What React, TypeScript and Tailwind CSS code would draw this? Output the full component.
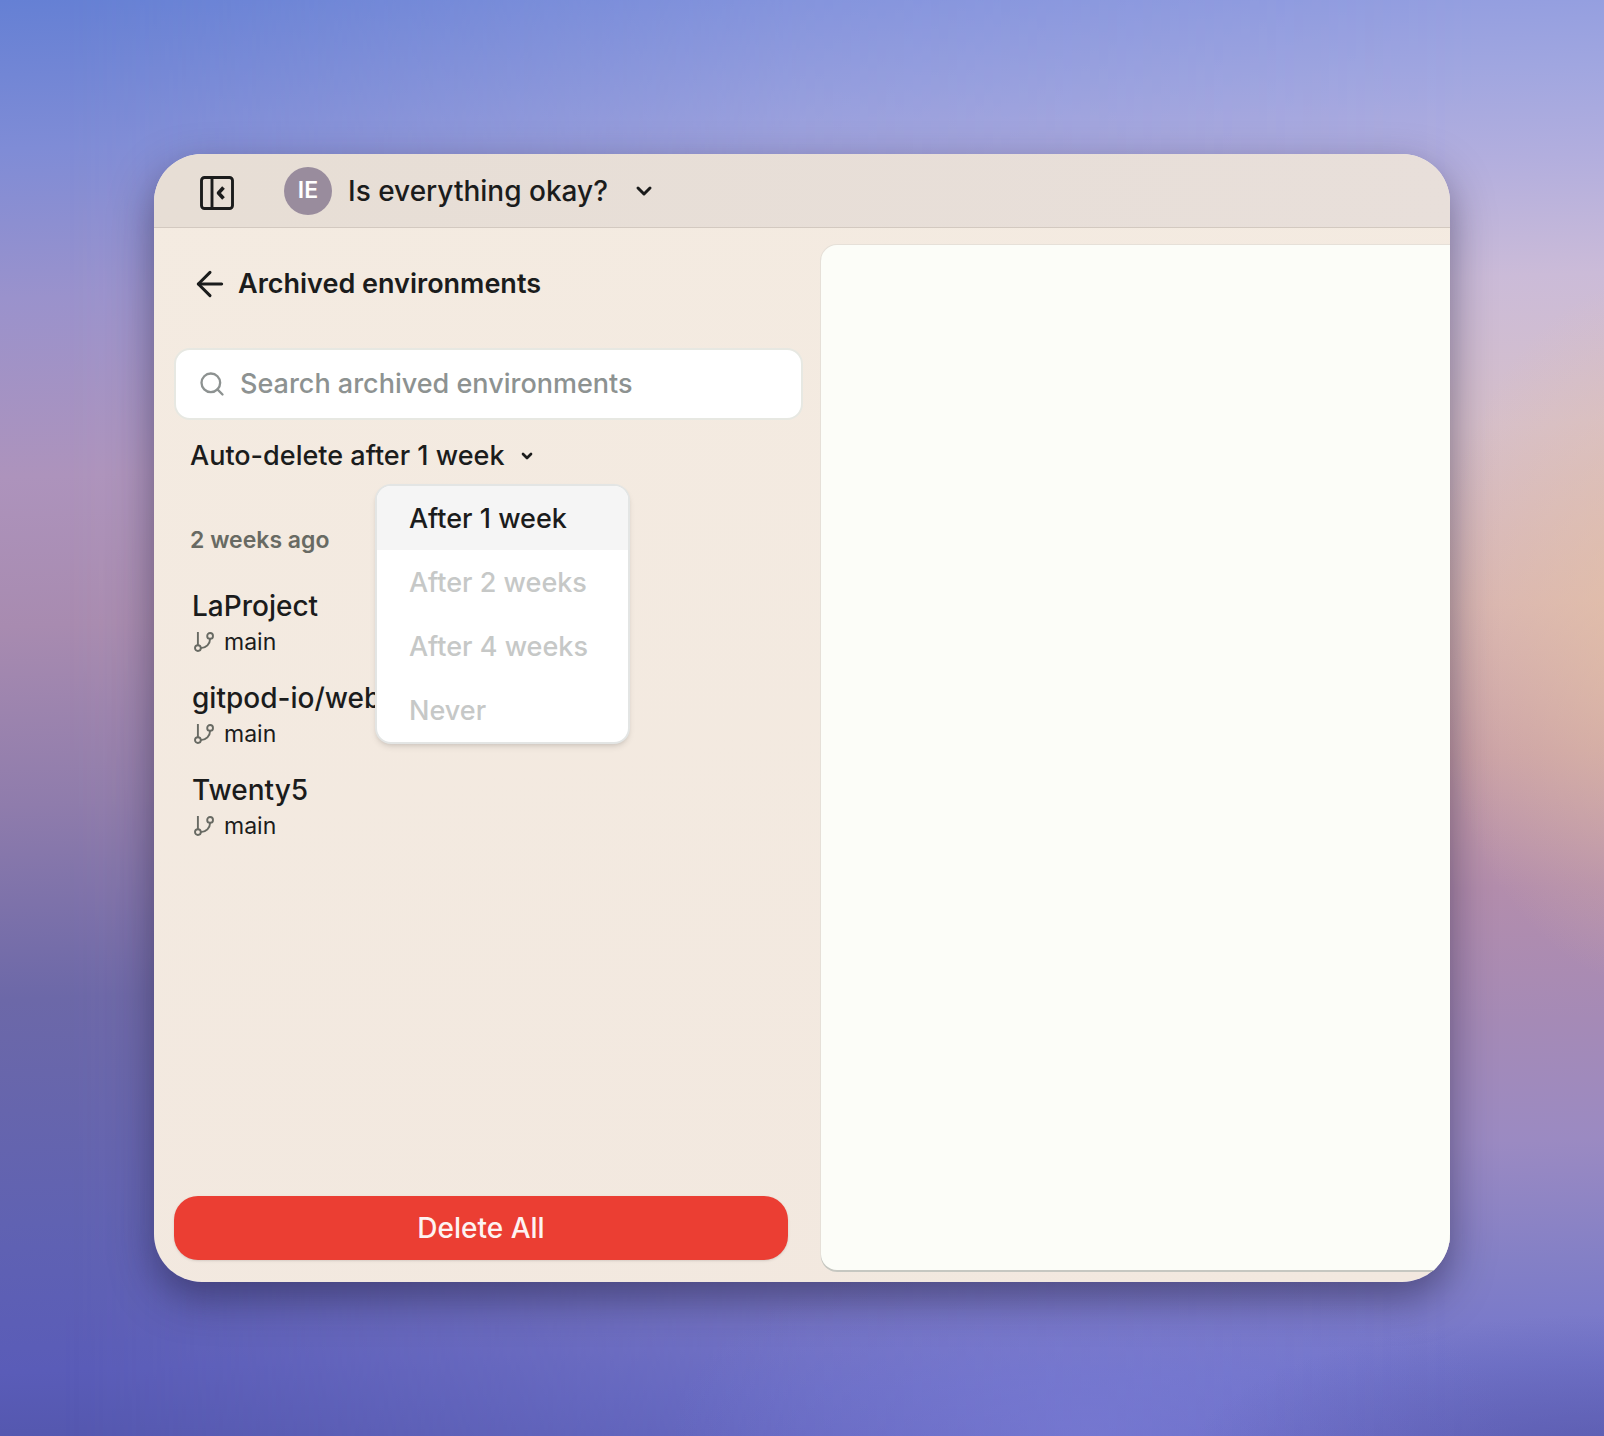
import React, { useState } from 'react';
import { ArrowLeft, ChevronDown, Search } from 'lucide-react';

const environments = [
  { name: 'LaProject', branch: 'main' },
  { name: 'gitpod-io/web', branch: 'main' },
  { name: 'Twenty5', branch: 'main' },
];

const retentionOptions = [
  { label: 'After 1 week', disabled: false },
  { label: 'After 2 weeks', disabled: true },
  { label: 'After 4 weeks', disabled: true },
  { label: 'Never', disabled: true },
];

function SidebarIcon() {
  return (
    <svg viewBox="0 0 34 34" className="w-[34px] h-[34px]" fill="none" stroke="currentColor" strokeWidth="2.9" strokeLinejoin="round">
      <rect x="1.5" y="1.5" width="31" height="31" rx="3" />
      <path d="M12 1.5v31" />
      <path d="M23.5 11.5l-5 5.5 5 5.5" strokeWidth="3.6" />
    </svg>
  );
}

function BranchIcon() {
  return (
    <svg viewBox="0 0 20 20" className="w-5 h-5 text-[#686a63]" fill="none" stroke="currentColor" strokeWidth="1.9">
      <circle cx="3.9" cy="16.1" r="2.9" />
      <circle cx="16.1" cy="3.9" r="2.9" />
      <path d="M3.9 0v13.2M16.1 6.8c0 5-4 9.3-9.3 9.3" />
    </svg>
  );
}

function Header() {
  return (
    <header className="flex items-center h-[74px] pl-[46px] bg-linear-to-r from-[#e7ded5] to-[#e8dfda] border-b border-[#d3c9c0]">
      <button type="button" aria-label="Toggle sidebar" className="pt-1">
        <SidebarIcon />
      </button>
      <button type="button" className="ml-[50px] flex items-center">
        <span className="w-12 h-12 rounded-full bg-[#998c9d] text-white text-[23px] font-semibold flex items-center justify-center">IE</span>
        <span className="ml-4 text-[28px] font-medium">Is everything okay?</span>
        <ChevronDown className="ml-6 w-6 h-6" strokeWidth={3} />
      </button>
    </header>
  );
}

function RetentionMenu({ onSelect }: { onSelect: (label: string) => void }) {
  return (
    <div role="menu" className="absolute left-[185px] top-12 z-10 w-[255px] rounded-2xl border-2 border-[#e3e5e4] bg-white overflow-hidden shadow-md">
      {retentionOptions.map((option) => (
        <button
          key={option.label}
          type="button"
          role="menuitem"
          disabled={option.disabled}
          onClick={() => onSelect(option.label)}
          className="block w-full h-16 pt-0.5 pl-8 text-left text-[27px] font-medium enabled:bg-[#f5f5f5] disabled:text-[#c6c8c7]"
        >
          {option.label}
        </button>
      ))}
    </div>
  );
}

function Sidebar() {
  const [query, setQuery] = useState('');
  const [retention, setRetention] = useState('After 1 week');

  return (
    <aside className="w-[667px] shrink-0 flex flex-col pb-[22px]">
      <div className="flex items-center gap-2 h-10 mt-9 ml-9">
        <button type="button" aria-label="Back">
          <ArrowLeft className="w-10 h-10" strokeWidth={1.8} />
        </button>
        <h1 className="text-[27px] font-semibold">Archived environments</h1>
      </div>

      <label className="mt-11 ml-5 mr-[18px] h-[72px] flex items-center gap-3.5 pl-[22px] rounded-2xl border-2 border-[#e7e8e2] bg-white">
        <Search className="w-7 h-7 text-[#8d9291]" strokeWidth={2} />
        <input
          type="text"
          aria-label="Search archived environments"
          value={query}
          onChange={(e) => setQuery(e.target.value)}
          placeholder="Search archived environments"
          className="flex-1 text-[27px] font-medium outline-none placeholder:text-[#8d9291]"
        />
      </label>

      <div className="relative mt-4 ml-9">
        <button type="button" className="flex items-center gap-3.5 h-10 text-[27px] font-medium">
          Auto-delete {retention.toLowerCase()}
          <ChevronDown className="w-4 h-4" strokeWidth={4} />
        </button>
        <RetentionMenu onSelect={setRetention} />
      </div>

      <h2 className="mt-12 ml-9 text-[23px] leading-8 font-semibold text-[#686a63]">2 weeks ago</h2>
      <ul className="mt-[30px] ml-[38px] flex flex-col gap-5">
        {environments.map((env) => (
          <li key={env.name}>
            <p className="text-[28px] leading-10 font-medium">{env.name}</p>
            <p className="flex items-center gap-2.5 pl-0.5 text-[23px] leading-8">
              <BranchIcon />
              {env.branch}
            </p>
          </li>
        ))}
      </ul>

      <button type="button" className="mt-auto ml-5 mr-[33px] h-16 rounded-3xl bg-[#eb3e33] text-[28px] font-medium text-[#fdf3f2] shadow-sm">
        Delete All
      </button>
    </aside>
  );
}

export default function App() {
  return (
    <div className="relative min-h-screen flex p-[154px] overflow-hidden bg-[#8f86c4] font-[Inter,sans-serif] text-[#1b1c1c]">
      <div className="absolute inset-0 bg-[linear-gradient(178deg,#6580d4_0%,#7f8cd6_10%,#9a92cc_20%,#ad93bc_32%,#a88bb0_42%,#8f7cac_54%,#6c68a8_67%,#6062b2_82%,#5a5cb8_92%,#5054a8_100%)]" />
      <div className="absolute inset-0 mask-[linear-gradient(90deg,transparent_4%,rgb(0_0_0/0.7)_50%,black_92%)] bg-[linear-gradient(178deg,#8b99e0_0%,#a0a6e0_8%,#b2aede_14%,#cbbbd8_22%,#d6bfca_32%,#d8b5b4_44%,#c9a0a8_54%,#b38dac_63%,#a58ab6_72%,#9b8ac2_80%,#8480c6_88%,#7476cc_95%,#6c6ec8_100%)]" />
      <div className="absolute inset-0 bg-[radial-gradient(240px_360px_at_104%_44%,rgb(232_196_162/0.7),transparent)]" />
      <div className="absolute inset-0 bg-[radial-gradient(420px_150px_at_100%_102%,rgb(85_85_165/0.7),transparent),radial-gradient(420px_200px_at_68%_100%,rgb(128_130_220/0.5),transparent)]" />
      <div className="relative flex-1 flex flex-col rounded-[48px] overflow-hidden bg-[linear-gradient(170deg,#f4ebe1,#f2e8df)] shadow-[0_16px_40px_rgba(30,25,60,0.5)]">
        <Header />
        <main className="flex-1 flex">
          <Sidebar />
          <section className="flex-1 mt-[17px] mb-3 rounded-l-2xl bg-[#fcfdf8] shadow-[0_2px_0_#c6c7c1,0_0_0_1px_#e6e0d8]" />
        </main>
      </div>
    </div>
  );
}
